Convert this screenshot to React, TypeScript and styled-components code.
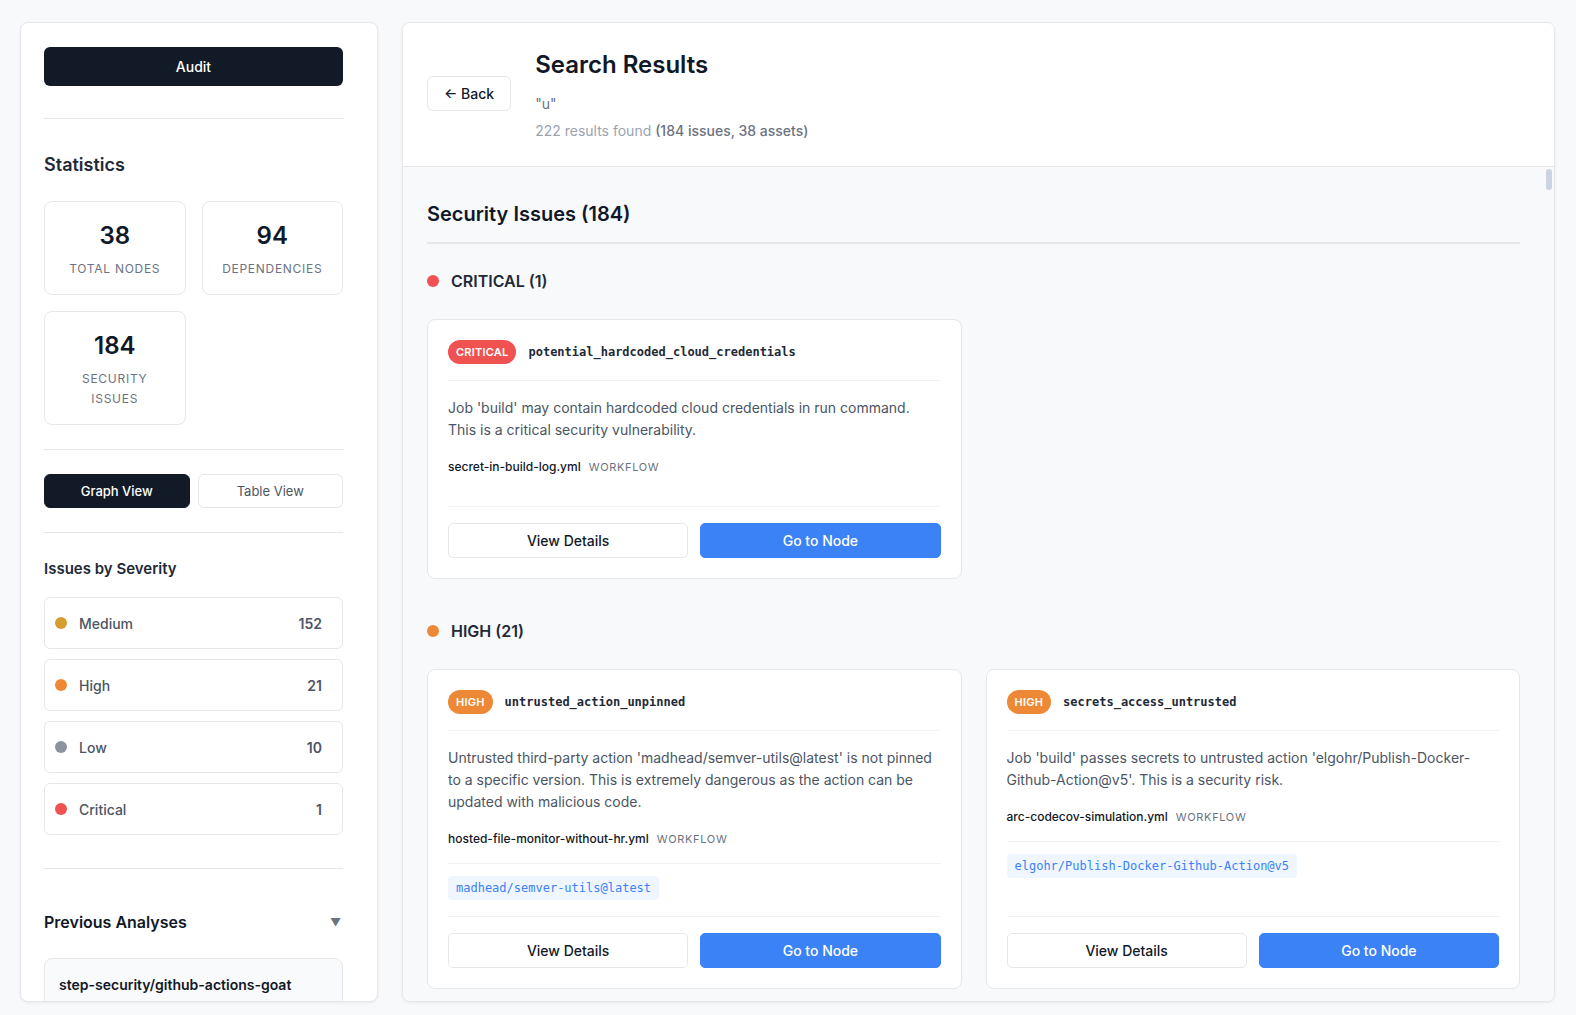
import React, { useEffect, useRef, useState } from 'react';
import styled, { createGlobalStyle } from 'styled-components';

type Severity = 'critical' | 'high' | 'medium' | 'low';

const SEV_COLOR: Record<Severity, string> = {
  critical: '#f05252',
  high: '#ed8936',
  medium: '#d69e2e',
  low: '#8c939d',
};

const GlobalStyle = createGlobalStyle`
  * { box-sizing: border-box; }
  html, body { margin: 0; padding: 0; height: 100%; }
  body {
    background: #f8f9fb;
    font-family: Inter, "Noto Sans", "Liberation Sans", sans-serif;
    color: #111827;
    -webkit-font-smoothing: antialiased;
  }
  #root { height: 100%; }
  button { font-family: inherit; }
`;

const Page = styled.div`
  height: 100vh;
  display: flex;
  gap: 24px;
  padding: 22px 21px 13px 20px;
`;

/* ---------- Sidebar ---------- */

const Sidebar = styled.aside`
  width: 358px;
  flex-shrink: 0;
  background: #fff;
  border: 1px solid #e5e7eb;
  border-radius: 8px;
  box-shadow: 0 1px 3px rgba(15, 23, 42, 0.06);
  padding: 24px 34px 0 23px;
  overflow: hidden;
  display: flex;
  flex-direction: column;
`;

const AuditButton = styled.button`
  height: 39px;
  width: 100%;
  border: none;
  border-radius: 6px;
  background: #131a27;
  color: #fff;
  font-size: 14px;
  font-weight: 500;
  flex-shrink: 0;
`;

const Divider = styled.div<{ $top: number; $bottom: number }>`
  height: 1px;
  flex-shrink: 0;
  background: #e5e7eb;
  margin-top: ${(p) => p.$top}px;
  margin-bottom: ${(p) => p.$bottom}px;
`;

const SideTitle = styled.h3<{ $size: number; $mb: number }>`
  margin: 0 0 ${(p) => p.$mb}px;
  font-size: ${(p) => p.$size}px;
  line-height: ${(p) => (p.$size >= 17 ? 26 : 22)}px;
  font-weight: 600;
  color: #1f2937;
  flex-shrink: 0;
`;

const StatsGrid = styled.div`
  display: grid;
  grid-template-columns: 1fr 1fr;
  gap: 16px;
  align-items: start;
  flex-shrink: 0;
`;

const StatCard = styled.div`
  border: 1px solid #e5e7eb;
  border-radius: 8px;
  padding: 18px 16px 15px;
  text-align: center;
`;

const StatValue = styled.div`
  font-size: 24px;
  line-height: 32px;
  font-weight: 600;
  color: #111827;
`;

const StatLabel = styled.div`
  margin-top: 7px;
  font-size: 12px;
  line-height: 20px;
  letter-spacing: 0.06em;
  text-transform: uppercase;
  color: #6b7280;
`;

const ToggleRow = styled.div`
  display: grid;
  grid-template-columns: 1fr 1fr;
  gap: 8px;
  flex-shrink: 0;
`;

const ToggleButton = styled.button<{ $active?: boolean }>`
  height: 34px;
  border-radius: 6px;
  font-size: 13px;
  font-weight: ${(p) => (p.$active ? 500 : 400)};
  border: 1px solid ${(p) => (p.$active ? '#131a27' : '#e5e7eb')};
  background: ${(p) => (p.$active ? '#131a27' : '#fff')};
  color: ${(p) => (p.$active ? '#fff' : '#4b5563')};
`;

const SeverityList = styled.div`
  display: flex;
  flex-direction: column;
  gap: 10px;
  flex-shrink: 0;
`;

const SeverityRow = styled.div`
  height: 52px;
  display: flex;
  align-items: center;
  border: 1px solid #e5e7eb;
  border-radius: 6px;
  padding: 0 20px 0 10px;
`;

const Dot = styled.span<{ $color: string }>`
  width: 12px;
  height: 12px;
  border-radius: 50%;
  background: ${(p) => p.$color};
  flex-shrink: 0;
`;

const SeverityName = styled.span`
  flex: 1;
  margin-left: 12px;
  font-size: 14px;
  font-weight: 500;
  color: #4b5563;
`;

const SeverityCount = styled.span`
  font-size: 14px;
  font-weight: 600;
  color: #4b5563;
`;

const PrevHeader = styled.div`
  display: flex;
  align-items: center;
  justify-content: space-between;
  margin-bottom: 24px;
  flex-shrink: 0;
`;

const PrevTitle = styled.h3`
  margin: 0;
  font-size: 16px;
  line-height: 24px;
  font-weight: 600;
  color: #111827;
`;

const Caret = styled.span`
  font-size: 11px;
  color: #6b7280;
  margin-right: 2px;
`;

const PrevItem = styled.div`
  flex-shrink: 0;
  background: #f9fafb;
  border: 1px solid #e5e7eb;
  border-radius: 8px;
  padding: 16px 14px;
  font-size: 14px;
  line-height: 20px;
  font-weight: 600;
  color: #111827;
`;

const PrevMeta = styled.div`
  margin-top: 6px;
  font-size: 12px;
  font-weight: 400;
  color: #6b7280;
`;

/* ---------- Main ---------- */

const Main = styled.main`
  flex: 1;
  min-width: 0;
  background: #fff;
  border: 1px solid #e5e7eb;
  border-radius: 8px;
  box-shadow: 0 1px 3px rgba(15, 23, 42, 0.06);
  overflow: hidden;
  display: flex;
  flex-direction: column;
`;

const Header = styled.header`
  display: flex;
  align-items: center;
  gap: 24px;
  padding: 26px 24px 25px;
  border-bottom: 1px solid #e5e7eb;
  background: #fff;
  flex-shrink: 0;
`;

const BackButton = styled.button`
  height: 35px;
  padding: 0 16px;
  margin-top: -3px;
  border: 1px solid #e5e7eb;
  border-radius: 6px;
  background: #fff;
  font-size: 14px;
  font-weight: 500;
  color: #111827;
`;

const HeaderText = styled.div`
  display: flex;
  flex-direction: column;
`;

const PageTitle = styled.h1`
  margin: 0;
  font-size: 24px;
  line-height: 32px;
  font-weight: 600;
  color: #111827;
`;

const Query = styled.div`
  margin-top: 13px;
  font-size: 14px;
  line-height: 20px;
  color: #6b7280;
`;

const ResultCount = styled.div`
  margin-top: 7px;
  font-size: 14px;
  line-height: 20px;
  color: #9ca3af;
`;

const ResultDetail = styled.span`
  color: #6b7280;
  font-weight: 500;
`;

const BodyFrame = styled.div`
  position: relative;
  flex: 1;
  min-height: 0;
  display: flex;
  background: #f8f9fb;
`;

const Body = styled.div`
  flex: 1;
  min-width: 0;
  overflow-y: auto;
  scrollbar-width: none;
  padding: 33px 34px 32px 24px;

  &::-webkit-scrollbar {
    display: none;
  }
`;

const ScrollTrack = styled.div`
  position: absolute;
  top: 0;
  right: 0;
  bottom: 0;
  width: 10px;
  pointer-events: none;
`;

const ScrollThumb = styled.div`
  position: absolute;
  left: 2px;
  right: 2px;
  border-radius: 3px;
  background: #cbd5e1;
`;

const SectionTitle = styled.h2`
  margin: 0 0 25px;
  padding-bottom: 14px;
  border-bottom: 2px solid #e5e7eb;
  font-size: 20px;
  line-height: 28px;
  font-weight: 600;
  color: #111827;
`;

const Group = styled.section`
  margin-bottom: 40px;
`;

const GroupHeading = styled.h3`
  display: flex;
  align-items: center;
  gap: 12px;
  margin: 0 0 26px;
  font-size: 16px;
  line-height: 24px;
  font-weight: 600;
  color: #1f2937;
`;

const CardGrid = styled.div`
  display: grid;
  grid-template-columns: 1fr 1fr;
  gap: 24px;
`;

const Card = styled.article`
  background: #fff;
  border: 1px solid #e5e7eb;
  border-radius: 8px;
  padding: 20px;
  display: flex;
  flex-direction: column;
  min-height: 260px;
`;

const CardHeader = styled.div`
  display: flex;
  align-items: center;
  gap: 12px;
  padding-bottom: 16px;
  border-bottom: 1px solid #f1f2f4;
`;

const Badge = styled.span<{ $color: string }>`
  height: 24px;
  display: inline-flex;
  align-items: center;
  padding: 0 8px;
  border-radius: 12px;
  background: ${(p) => p.$color};
  color: #fff;
  font-size: 11px;
  font-weight: 600;
  letter-spacing: 0.02em;
  text-transform: uppercase;
`;

const RuleName = styled.code`
  font-family: "DejaVu Sans Mono", "Liberation Mono", monospace;
  font-size: 12px;
  font-weight: 600;
  color: #1f2937;
`;

const Description = styled.p`
  margin: 16px 0 0;
  font-size: 14px;
  line-height: 22px;
  color: #4b5563;
`;

const FileRow = styled.div`
  display: flex;
  align-items: baseline;
  gap: 8px;
  margin: 16px 0 14px;
  line-height: 20px;
`;

const FileName = styled.span`
  font-size: 12px;
  font-weight: 500;
  color: #111827;
`;

const FileType = styled.span`
  font-size: 11px;
  letter-spacing: 0.06em;
  text-transform: uppercase;
  color: #6b7280;
`;

const UsesSection = styled.div`
  display: flex;
  flex-wrap: wrap;
  gap: 8px;
  border-top: 1px solid #f1f2f4;
  padding: 12px 0 16px;
`;

const Chip = styled.code`
  font-family: "DejaVu Sans Mono", "Liberation Mono", monospace;
  font-size: 12px;
  line-height: 16px;
  padding: 4px 8px;
  border-radius: 4px;
  background: #eff6ff;
  color: #3b82f6;
`;

const CardFooter = styled.div`
  margin-top: auto;
  border-top: 1px solid #f1f2f4;
  padding-top: 16px;
  display: grid;
  grid-template-columns: 1fr 1fr;
  gap: 12px;
`;

const ActionButton = styled.button<{ $primary?: boolean }>`
  height: 35px;
  border-radius: 5px;
  font-size: 14px;
  font-weight: 500;
  border: 1px solid ${(p) => (p.$primary ? '#3b82f6' : '#e5e7eb')};
  background: ${(p) => (p.$primary ? '#3b82f6' : '#fff')};
  color: ${(p) => (p.$primary ? '#fff' : '#111827')};
`;

/* ---------- Data ---------- */

interface Issue {
  rule: string;
  description: string;
  file: string;
  uses?: string;
}

const criticalIssues: Issue[] = [
  {
    rule: 'potential_hardcoded_cloud_credentials',
    description:
      "Job 'build' may contain hardcoded cloud credentials in run command. This is a critical security vulnerability.",
    file: 'secret-in-build-log.yml',
  },
];

const highPool: Issue[] = [
  {
    rule: 'untrusted_action_unpinned',
    description:
      "Untrusted third-party action 'madhead/semver-utils@latest' is not pinned to a specific version. This is extremely dangerous as the action can be updated with malicious code.",
    file: 'hosted-file-monitor-without-hr.yml',
    uses: 'madhead/semver-utils@latest',
  },
  {
    rule: 'secrets_access_untrusted',
    description:
      "Job 'build' passes secrets to untrusted action 'elgohr/Publish-Docker-Github-Action@v5'. This is a security risk.",
    file: 'arc-codecov-simulation.yml',
    uses: 'elgohr/Publish-Docker-Github-Action@v5',
  },
];

const fill = (pool: Issue[], count: number): Issue[] =>
  Array.from({ length: count }, (_, i) => pool[i % pool.length]);

const groups: { severity: Severity; label: string; issues: Issue[] }[] = [
  { severity: 'critical', label: 'CRITICAL', issues: criticalIssues },
  { severity: 'high', label: 'HIGH', issues: fill(highPool, 21) },
  { severity: 'medium', label: 'MEDIUM', issues: fill(highPool, 152) },
  { severity: 'low', label: 'LOW', issues: fill(highPool, 10) },
];

const severityStats: { name: string; severity: Severity; count: number }[] = [
  { name: 'Medium', severity: 'medium', count: 152 },
  { name: 'High', severity: 'high', count: 21 },
  { name: 'Low', severity: 'low', count: 10 },
  { name: 'Critical', severity: 'critical', count: 1 },
];

/* ---------- Components ---------- */

const IssueCard: React.FC<{ issue: Issue; severity: Severity }> = ({ issue, severity }) => (
  <Card>
    <CardHeader>
      <Badge $color={SEV_COLOR[severity]}>{severity}</Badge>
      <RuleName>{issue.rule}</RuleName>
    </CardHeader>
    <Description>{issue.description}</Description>
    <FileRow>
      <FileName>{issue.file}</FileName>
      <FileType>workflow</FileType>
    </FileRow>
    {issue.uses && (
      <UsesSection>
        <Chip>{issue.uses}</Chip>
      </UsesSection>
    )}
    <CardFooter>
      <ActionButton>View Details</ActionButton>
      <ActionButton $primary>Go to Node</ActionButton>
    </CardFooter>
  </Card>
);

const ScrollArea: React.FC<{ children: React.ReactNode }> = ({ children }) => {
  const ref = useRef<HTMLDivElement>(null);
  const [thumb, setThumb] = useState({ top: 2, height: 18 });

  const update = () => {
    const el = ref.current;
    if (!el) return;
    const track = el.clientHeight - 4;
    const height = Math.max(18, (el.clientHeight / el.scrollHeight) * track);
    const maxScroll = Math.max(1, el.scrollHeight - el.clientHeight);
    const top = 2 + (el.scrollTop / maxScroll) * (track - height);
    setThumb({ top, height });
  };

  useEffect(() => {
    update();
    window.addEventListener('resize', update);
    return () => window.removeEventListener('resize', update);
  }, []);

  return (
    <BodyFrame>
      <Body ref={ref} onScroll={update}>
        {children}
      </Body>
      <ScrollTrack>
        <ScrollThumb style={{ top: thumb.top, height: thumb.height }} />
      </ScrollTrack>
    </BodyFrame>
  );
};

export default function App() {
  return (
    <>
      <GlobalStyle />
      <Page>
        <Sidebar>
          <AuditButton>Audit</AuditButton>
          <Divider $top={32} $bottom={33} />
          <SideTitle $size={18} $mb={23}>Statistics</SideTitle>
          <StatsGrid>
            <StatCard>
              <StatValue>38</StatValue>
              <StatLabel>Total Nodes</StatLabel>
            </StatCard>
            <StatCard>
              <StatValue>94</StatValue>
              <StatLabel>Dependencies</StatLabel>
            </StatCard>
            <StatCard>
              <StatValue>184</StatValue>
              <StatLabel>Security Issues</StatLabel>
            </StatCard>
          </StatsGrid>
          <Divider $top={24} $bottom={24} />
          <ToggleRow>
            <ToggleButton $active>Graph View</ToggleButton>
            <ToggleButton>Table View</ToggleButton>
          </ToggleRow>
          <Divider $top={24} $bottom={25} />
          <SideTitle $size={15} $mb={17}>Issues by Severity</SideTitle>
          <SeverityList>
            {severityStats.map((s) => (
              <SeverityRow key={s.name}>
                <Dot $color={SEV_COLOR[s.severity]} />
                <SeverityName>{s.name}</SeverityName>
                <SeverityCount>{s.count}</SeverityCount>
              </SeverityRow>
            ))}
          </SeverityList>
          <Divider $top={33} $bottom={41} />
          <PrevHeader>
            <PrevTitle>Previous Analyses</PrevTitle>
            <Caret>▼</Caret>
          </PrevHeader>
          <PrevItem>
            step-security/github-actions-goat
            <PrevMeta>38 nodes · 184 issues</PrevMeta>
          </PrevItem>
        </Sidebar>

        <Main>
          <Header>
            <BackButton>← Back</BackButton>
            <HeaderText>
              <PageTitle>Search Results</PageTitle>
              <Query>"u"</Query>
              <ResultCount>
                222 results found <ResultDetail>(184 issues, 38 assets)</ResultDetail>
              </ResultCount>
            </HeaderText>
          </Header>
          <ScrollArea>
            <SectionTitle>Security Issues (184)</SectionTitle>
            {groups.map((g) => (
              <Group key={g.severity}>
                <GroupHeading>
                  <Dot $color={SEV_COLOR[g.severity]} />
                  {g.label} ({g.issues.length})
                </GroupHeading>
                <CardGrid>
                  {g.issues.map((issue, i) => (
                    <IssueCard key={i} issue={issue} severity={g.severity} />
                  ))}
                </CardGrid>
              </Group>
            ))}
          </ScrollArea>
        </Main>
      </Page>
    </>
  );
}
